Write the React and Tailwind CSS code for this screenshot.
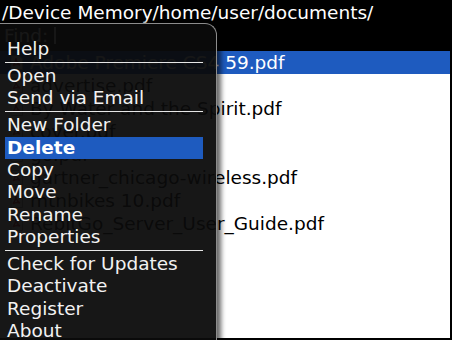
const files = [
  'Adobe Premiere CS4 59.pdf',
  'advertise.pdf',
  'By Water and the Spirit.pdf',
  'cover.pdf',
  'go.pdf',
  'gartner_chicago-wireless.pdf',
  'mtnbikes 10.pdf',
  'RebitGo_Server_User_Guide.pdf',
];

const menu = [
  ['Help'],
  '-',
  ['Open'],
  ['Send via Email'],
  '-',
  ['New Folder'],
  ['Delete', true],
  ['Copy'],
  ['Move'],
  ['Rename'],
  ['Properties'],
  '-',
  ['Check for Updates'],
  ['Deactivate'],
  ['Register'],
  ['About'],
];

function PdfIcon() {
  return (
    <svg width="13" height="15" viewBox="0 0 13 15" className="shrink-0">
      <path d="M1 0.5h8l3.5 3.5v10.5h-11.5z" fill="#fff" stroke="#999" />
      <path d="M3 11c2-3 3-6 3-8 0 2 1 5 4 7-3-1-5-0.5-7 1z" fill="none" stroke="#d4202a" strokeWidth="1.4" />
    </svg>
  );
}

export default function App() {
  return (
    <div className="relative w-[452px] h-[340px] overflow-hidden bg-black font-['DejaVu_Sans',sans-serif] text-[18.5px]">
      <div className="h-[25px] pl-[2px] leading-[25px] text-white whitespace-nowrap">
        /Device Memory/home/user/documents/
      </div>

      <div className="h-[26px] pl-[4px] flex items-start text-white leading-[22px]">
        <span>Find:</span>
        <span className="ml-[6px] mt-[2px] w-[2px] h-[17px] bg-white" />
      </div>

      <div className="h-[287px] mr-[2px] bg-white">
        {files.map((name, i) => (
          <div
            key={name}
            className={
              'h-[23px] flex items-center gap-[7px] pl-[10px] leading-[23px] whitespace-nowrap ' +
              (i === 0 ? 'bg-[#1e5bbf] text-white' : 'text-black')
            }
          >
            <PdfIcon />
            <span>{name}</span>
          </div>
        ))}
      </div>

      <div className="absolute left-0 top-[23px] w-[217px] h-[330px] rounded-tr-[12px] border-t border-r border-[#8c8c8c] bg-[#0b0b0b]/[0.95] shadow-[4px_0_5px_rgba(0,0,0,0.6)] pt-[13.5px] pl-[5px] pr-[13px]">
        {menu.map((item, i) =>
          item === '-' ? (
            <div key={i} className="my-[2px] h-px bg-[#e6e6e6]" />
          ) : (
            <div
              key={i}
              className={
                'h-[22.3px] pl-[2px] leading-[22.3px] whitespace-nowrap ' +
                (item[1] ? 'bg-[#1e5bbf] font-bold text-white' : 'text-[#f2f2f2]')
              }
            >
              {item[0]}
            </div>
          )
        )}
      </div>
    </div>
  );
}
